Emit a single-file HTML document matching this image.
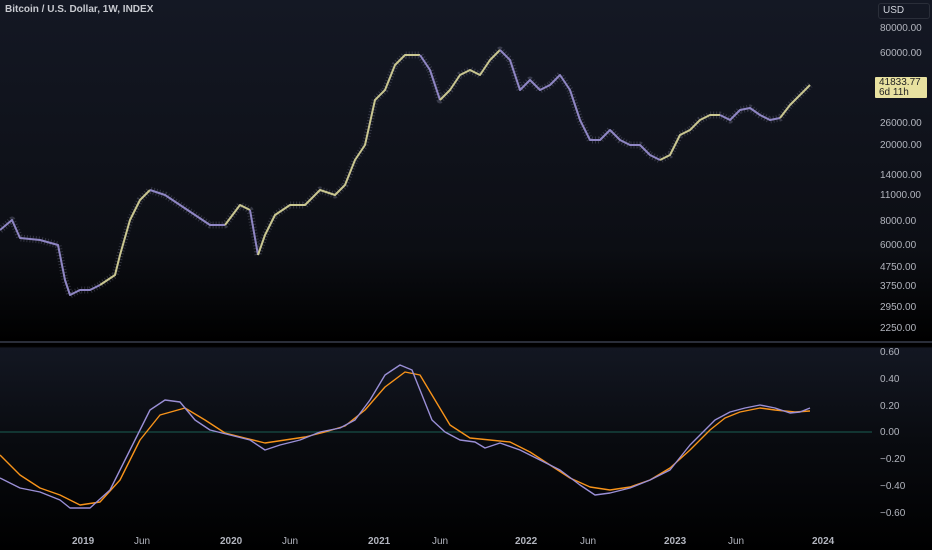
<!DOCTYPE html>
<html><head><meta charset="utf-8"><style>
html,body{margin:0;padding:0;width:932px;height:550px;overflow:hidden;background:#000;}
body{position:relative;font-family:"Liberation Sans",sans-serif;}
#bg{position:absolute;left:0;top:0;width:932px;height:550px;background:linear-gradient(#141824 0%,#0c0e14 45%,#000 62%,#000 63%,#131722 63.3%,#090b10 80%,#000 100%);}
.t{position:absolute;color:#d1d4dc;font-size:10px;}
.r{position:absolute;left:880px;color:#b2b5be;font-size:10px;}
.x{position:absolute;top:536px;color:#b2b5be;font-size:10px;}
polyline.p{fill:none;stroke-width:2;stroke-linejoin:round}
</style></head><body>
<div id="bg"></div>
<div style="position:absolute;left:0;top:341px;width:932px;height:2px;background:#2a2e39"></div>
<svg width="932" height="550" style="position:absolute;left:0;top:0">
<line x1="0" y1="432" x2="872" y2="432" stroke="#1b5e52" stroke-width="1"/>
<polyline fill="none" stroke="#a9a6c8" stroke-opacity="0.25" stroke-width="7" stroke-dasharray="1 2" stroke-linejoin="round" points="0,230 12,220 20,238 40,240 58,245 65,280 70,295 80,290 90,290 100,285 115,275 120,255 130,220 140,200 150,190 165,195 180,205 195,215 210,225 225,225 240,205 250,210 258,255 265,235 275,215 290,205 305,205 320,190 335,195 345,185 355,160 365,145 375,100 385,90 395,65 405,55 420,55 430,70 440,100 450,90 460,75 470,70 480,75 490,60 500,50 510,60 520,90 530,80 540,90 550,85 560,75 570,90 580,120 590,140 600,140 610,130 620,140 630,145 640,145 650,155 660,160 670,155 680,135 690,130 700,120 710,115 720,115 730,120 740,110 750,108 760,115 770,120 780,118 790,105 800,95 810,85"/>
<polyline class="p" stroke="#8f86c4" points="0,230 12,220 20,238 40,240 58,245 65,280 70,295 80,290 90,290 100,285"/>
<polyline class="p" stroke="#c9c690" points="100,285 115,275 120,255 130,220 140,200 150,190"/>
<polyline class="p" stroke="#8f86c4" points="150,190 165,195 180,205 195,215 210,225 225,225"/>
<polyline class="p" stroke="#c9c690" points="225,225 240,205 250,210"/>
<polyline class="p" stroke="#8f86c4" points="250,210 258,255"/>
<polyline class="p" stroke="#c9c690" points="258,255 265,235 275,215 290,205 305,205 320,190 335,195 345,185 355,160 365,145 375,100 385,90 395,65 405,55 420,55"/>
<polyline class="p" stroke="#8f86c4" points="420,55 430,70 440,100"/>
<polyline class="p" stroke="#c9c690" points="440,100 450,90 460,75 470,70 480,75 490,60 500,50"/>
<polyline class="p" stroke="#8f86c4" points="500,50 510,60 520,90 530,80 540,90 550,85 560,75 570,90 580,120 590,140 600,140 610,130 620,140 630,145 640,145 650,155 660,160"/>
<polyline class="p" stroke="#c9c690" points="660,160 670,155 680,135 690,130 700,120 710,115 720,115"/>
<polyline class="p" stroke="#8f86c4" points="720,115 730,120 740,110 750,108 760,115 770,120 780,118"/>
<polyline class="p" stroke="#c9c690" points="780,118 790,105 800,95 810,85"/>
<polyline fill="none" stroke="#f7931a" stroke-width="1.4" stroke-linejoin="round" points="0,455 20,475 40,488 60,495 80,505 100,502 120,480 140,440 160,415 185,408 205,420 225,433 245,438 265,443 285,440 305,437 325,432 345,426 365,410 385,387 405,372 420,375 435,400 450,425 470,438 490,440 510,442 530,452 550,465 570,478 590,487 610,490 630,487 650,480 670,468 690,450 710,430 725,418 740,412 760,408 775,410 795,412 810,411"/>
<polyline fill="none" stroke="#9a8fd6" stroke-width="1.4" stroke-linejoin="round" points="0,478 20,488 40,492 60,500 70,508 90,508 110,490 130,450 150,410 165,400 180,402 195,420 210,430 230,435 250,440 265,450 280,445 300,440 320,432 340,428 355,420 370,400 385,375 400,365 412,370 420,390 432,420 445,432 460,440 475,442 485,448 500,443 520,450 540,460 560,470 580,485 595,495 610,493 630,488 650,480 670,470 690,445 705,430 715,420 730,412 745,408 760,405 775,408 790,413 800,412 810,408"/>
</svg>
<div class="t" style="left:5px;top:4px;font-weight:bold;color:#c8cad0">Bitcoin / U.S. Dollar, 1W, INDEX</div>
<div style="position:absolute;left:878px;top:3px;width:46px;height:14px;border:1px solid #2a2e39;border-radius:3px;color:#d1d4dc;font-size:10px;padding-left:4px;line-height:14px">USD</div>
<div class="r" style="top:23px">80000.00</div>
<div class="r" style="top:48px">60000.00</div>
<div class="r" style="top:118px">26000.00</div>
<div class="r" style="top:140px">20000.00</div>
<div class="r" style="top:170px">14000.00</div>
<div class="r" style="top:190px">11000.00</div>
<div class="r" style="top:216px">8000.00</div>
<div class="r" style="top:240px">6000.00</div>
<div class="r" style="top:262px">4750.00</div>
<div class="r" style="top:281px">3750.00</div>
<div class="r" style="top:302px">2950.00</div>
<div class="r" style="top:323px">2250.00</div>
<div style="position:absolute;left:875px;top:77px;width:48px;height:20px;background:#e8e1a0;color:#222;font-size:10px;line-height:10px;padding:1px 0 0 4px;border-radius:1px">41833.77<br>6d 11h</div>
<div class="r" style="top:347px">0.60</div>
<div class="r" style="top:374px">0.40</div>
<div class="r" style="top:401px">0.20</div>
<div class="r" style="top:427px">0.00</div>
<div class="r" style="top:454px">−0.20</div>
<div class="r" style="top:481px">−0.40</div>
<div class="r" style="top:508px">−0.60</div>
<div class="x" style="left:72px;font-weight:bold">2019</div>
<div class="x" style="left:134px">Jun</div>
<div class="x" style="left:220px;font-weight:bold">2020</div>
<div class="x" style="left:282px">Jun</div>
<div class="x" style="left:368px;font-weight:bold">2021</div>
<div class="x" style="left:432px">Jun</div>
<div class="x" style="left:515px;font-weight:bold">2022</div>
<div class="x" style="left:580px">Jun</div>
<div class="x" style="left:664px;font-weight:bold">2023</div>
<div class="x" style="left:728px">Jun</div>
<div class="x" style="left:812px;font-weight:bold">2024</div>
</body></html>
